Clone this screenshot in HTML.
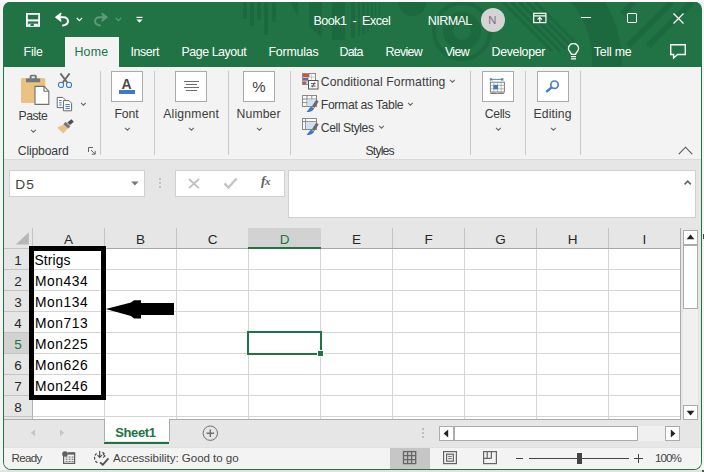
<!DOCTYPE html>
<html lang="en">
<head>
<meta charset="utf-8">
<title>Book1 - Excel</title>
<style>
html,body{margin:0;padding:0;}
body{width:704px;height:472px;overflow:hidden;background:#f5f4f4;position:relative;font-family:"Liberation Sans",sans-serif;}
.a{position:absolute;}
.t{position:absolute;white-space:pre;font-family:"Liberation Sans",sans-serif;}
#win{position:absolute;left:3px;top:2px;width:697px;height:467px;border:1px solid #217346;border-top:none;border-radius:7px 7px 8px 8px;overflow:hidden;background:linear-gradient(#217346 0,#217346 120px,#f3f3f3 120px);}
#in{position:absolute;left:-4px;top:-2px;width:704px;height:472px;}
.sep{position:absolute;width:1px;background:#c8c8c8;top:71px;height:84px;}
.box{position:absolute;top:71px;width:30px;height:29px;border:1px solid #ababab;background:#fff;}
.ch{position:absolute;}
.vl{position:absolute;width:1px;background:#d4d4d4;top:249px;height:170px;}
.hl{position:absolute;height:1px;background:#d4d4d4;left:33px;width:647px;}
.rh{position:absolute;left:4px;width:28px;height:20px;border-bottom:1px solid #c4c4c4;font-size:13.5px;line-height:24px;overflow:hidden;text-align:center;color:#262626;}
.chd{position:absolute;top:228px;height:20px;width:71px;font-size:13.5px;line-height:23px;text-align:center;color:#262626;}
.hsep{position:absolute;top:228px;width:1px;height:20px;background:#c4c4c4;}
.cell{position:absolute;white-space:pre;font-size:13px;line-height:13px;color:#000;}
</style>
</head>
<body>
<div class="a" style="left:0;top:470px;width:704px;height:2px;background:#e2e2e2;"></div>
<div class="a" style="left:0;top:0;width:704px;height:2px;background:#fbfafa;"></div>
<div id="win"><div id="in">
<div class="a" style="left:0;top:0;width:704px;height:67px;background:#217346;"></div>
<svg class="a" style="left:0;top:0" width="704" height="67" viewBox="0 0 704 67">
 <g fill="#1d693f">
  <rect x="243" y="2" width="4" height="17"/><rect x="250" y="2" width="4" height="24"/><rect x="257" y="2" width="4" height="18"/><rect x="264" y="2" width="4" height="33"/><rect x="272" y="2" width="4" height="20"/>
  <polygon points="290.500,2 298.200,2 298.200,17"/>
  <polygon points="309,2 322,2 322,37 309,27"/><rect x="332" y="2" width="13" height="38"/>
  <rect x="351" y="2" width="4" height="36"/><rect x="358" y="2" width="2" height="35"/><rect x="362.500" y="2" width="2" height="33"/><rect x="367" y="2" width="1.500" height="30"/><rect x="371" y="2" width="1.500" height="26"/><rect x="375" y="2" width="1" height="22"/><rect x="379" y="2" width="1" height="18"/>
  <circle cx="412.500" cy="2" r="14"/>
 </g>
 <g fill="none" stroke="#1d693f">
  <circle cx="462" cy="31" r="14" stroke-width="10"/>
  <circle cx="462" cy="31" r="28" stroke-width="4"/>
  <path d="M571 2A92 92 0 0 1 592 67H622A122 122 0 0 0 605 2z" fill="#1d693f" stroke="none"/>
 </g>
 <g stroke="#1d693f" stroke-width="3">
  <line x1="503" y1="2" x2="552" y2="51"/><line x1="511" y1="2" x2="560" y2="51"/><line x1="519" y1="2" x2="566" y2="49"/><line x1="527" y1="2" x2="570" y2="45"/><line x1="535" y1="2" x2="574" y2="41"/>
 </g>
 <g stroke="#1d693f" stroke-width="6">
  <line x1="634" y1="2" x2="622" y2="14"/><line x1="672" y1="2" x2="628" y2="46"/><line x1="692" y1="2" x2="648" y2="46"/>
 </g>
</svg>
<div class="a" style="left:65px;top:37px;width:54px;height:30px;background:#f3f3f3;"></div>
<!-- QAT -->
<svg class="a" style="left:25px;top:12px" width="16" height="16" viewBox="0 0 16 16" fill="none">
 <rect x="1.900" y="1.900" width="12.200" height="12" stroke="#fff" stroke-width="1.800"/><rect x="1.900" y="7.400" width="12.200" height="2" fill="#fff"/>
 <rect x="3.400" y="11.700" width="9.400" height="2.400" fill="#fff"/><rect x="5.500" y="11.700" width="3.300" height="2.300" fill="#217346"/>
</svg>
<svg class="a" style="left:54px;top:12px" width="17" height="15" viewBox="0 0 17 15" fill="none" stroke="#fff" stroke-width="2" stroke-linecap="round" stroke-linejoin="round">
 <path d="M6.800 1.400L1.800 5.200L6.800 9L5.400 5.200z" fill="#fff" stroke-width="1.400"/><path d="M3 5.200h6.600c5.400 0 6.400 7.600 -0.600 8.200"/>
</svg>
<svg class="a" style="left:76px;top:17px" width="7" height="5" viewBox="0 0 7 5" fill="none" stroke="#fff" stroke-width="1.2"><path d="M0.7 1l2.7 2.6L6.1 1"/></svg>
<svg class="a" style="left:92px;top:12px" width="17" height="15" viewBox="0 0 17 15" fill="none" stroke="#5c9a79" stroke-width="2" stroke-linecap="round" stroke-linejoin="round">
 <path d="M10.200 1.400L15.200 5.200L10.200 9L11.600 5.200z" fill="#5c9a79" stroke-width="1.400"/><path d="M14 5.200H7.400c-5.400 0 -6.400 7.600 0.600 8.200"/>
</svg>
<svg class="a" style="left:115px;top:17px" width="7" height="5" viewBox="0 0 7 5" fill="none" stroke="#5c9a79" stroke-width="1.2"><path d="M0.7 1l2.7 2.6L6.1 1"/></svg>
<svg class="a" style="left:136px;top:16px" width="7" height="8" viewBox="0 0 7 8"><rect x="0.5" y="0.8" width="6" height="1.2" fill="#fff"/><path d="M0.5 3.6h6L3.5 6.8z" fill="#fff"/></svg>
<!-- avatar -->
<div class="a" style="left:481px;top:8px;width:24px;height:24px;border-radius:12px;background:#d4d4d4;"></div>
<!-- ribbon display -->
<svg class="a" style="left:533px;top:12px" width="14" height="12" viewBox="0 0 14 12" fill="none" stroke="#fff" stroke-width="1.200"><rect x="0.700" y="1.300" width="12.200" height="9.300"/><path d="M0.700 3.900h12.200"/><path d="M6.800 10.600V5.600M4.600 7.600l2.200-2.200l2.200 2.200"/></svg>
<div class="a" style="left:581px;top:16.800px;width:10px;height:1.300px;background:#fff;"></div>
<div class="a" style="left:626.800px;top:12.800px;width:8px;height:8px;border:1.300px solid #fff;border-radius:1px;"></div>
<svg class="a" style="left:673px;top:13px" width="11" height="11" viewBox="0 0 11 11" stroke="#fff" stroke-width="1.300"><path d="M0.500 0.500l10 10M10.500 0.500l-10 10"/></svg>
<!-- lightbulb -->
<svg class="a" style="left:567px;top:43px" width="14" height="18" viewBox="0 0 14 18" fill="none" stroke="#fff" stroke-width="1.300"><path d="M4.400 11.400c0-2-3-3-3-5.800a5.100 5.100 0 0 1 10.200 0c0 2.800-3 3.800-3 5.800z"/><path d="M4 13.600h5M4 15.900h5" stroke-width="1.200"/></svg>
<!-- comment -->
<svg class="a" style="left:669px;top:43px" width="18" height="17" viewBox="0 0 18 17" fill="none" stroke="#fff" stroke-width="1.400" stroke-linejoin="miter"><path d="M1.700 1.700h14.600v9.800H8.600L4.600 15V11.500H1.700z"/></svg>

<div class="a" style="left:0;top:67px;width:704px;height:92px;background:#f3f3f3;"></div>
<div class="a" style="left:0;top:159px;width:704px;height:1px;background:#dadada;"></div>
<!-- paste -->
<svg class="a" style="left:20px;top:74px" width="31" height="32" viewBox="0 0 31 32">
 <rect x="1" y="4" width="24.400" height="25" rx="1.500" fill="#eac282"/>
 <path d="M6 8.200V4.400h3.600V2.400a1.600 1.600 0 0 1 1.600-1.600h4a1.600 1.600 0 0 1 1.600 1.600V4.400h3.400V8.200z" fill="#777"/><rect x="11.600" y="2.400" width="3.200" height="1.800" fill="#f3f3f3"/>
 <path d="M15 12.400h9l4.800 4.800v13.200H15z" fill="#fff" stroke="#6f6f6f" stroke-width="1.100"/><path d="M24 12.400v4.800h4.800" fill="none" stroke="#6f6f6f" stroke-width="1.100"/>
</svg>
<svg class="ch" style="left:30px;top:129px" width="7" height="5" viewBox="0 0 7 5" fill="none" stroke="#666" stroke-width="1.050"><path d="M1 0.800l2.400 2.400L5.800 0.800"/></svg>
<!-- cut -->
<svg class="a" style="left:57px;top:73px" width="16" height="16" viewBox="0 0 16 16" fill="none">
 <path d="M3.400 0.400L10.400 9.800M12.600 0.400L5.600 9.800" stroke="#6a6a6a" stroke-width="1.900"/>
 <circle cx="4" cy="11.900" r="2.600" stroke="#4178be" stroke-width="1.050"/><circle cx="12" cy="11.900" r="2.600" stroke="#4178be" stroke-width="1.050"/>
</svg>
<!-- copy -->
<svg class="a" style="left:56px;top:96px" width="18" height="16" viewBox="0 0 18 16" fill="none">
 <path d="M1.200 1.400h5.600l2.400 2.400v7.800H1.200z" fill="#fff" stroke="#6a6a6a"/>
 <path d="M7.400 4.600h5.600l2.600 2.600v7.600H7.400z" fill="#fff" stroke="#6a6a6a"/>
 <path d="M3 4.600h2.600M3 6.800h2.600M3 9h2.600" stroke="#4178be"/><path d="M9.400 8.600h4.400M9.400 10.600h4.400M9.400 12.600h4.400" stroke="#4178be"/>
</svg>
<svg class="ch" style="left:80px;top:102px" width="7" height="5" viewBox="0 0 7 5" fill="none" stroke="#666" stroke-width="1.050"><path d="M1 0.800l2.400 2.400L5.800 0.800"/></svg>
<!-- format painter -->
<svg class="a" style="left:57px;top:119px" width="17" height="16" viewBox="0 0 17 16">
 <path d="M0.200 8.600L6.200 14.600L11 9.200L6.800 5.400z" fill="#eac282"/>
 <path d="M6.400 5.200l4.800 4.400l2.200-2.400l-4.800-4.400z" fill="#777"/><path d="M10.400 3.600l2.600 2.400l3.800-3.200l-2.400-2.600z" fill="#4e4e4e"/>
</svg>
<!-- dialog launcher -->
<svg class="a" style="left:88px;top:147px" width="8" height="8" viewBox="0 0 8 8" fill="none" stroke="#666" stroke-width="1"><path d="M0.500 5V0.500H5"/><path d="M3 3l4 4M7.200 3.800V7.200H3.800"/></svg>
<div class="sep" style="left:100px"></div><div class="sep" style="left:154px"></div><div class="sep" style="left:228px"></div><div class="sep" style="left:290px"></div>
<div class="sep" style="left:470px"></div><div class="sep" style="left:525px"></div><div class="sep" style="left:580px"></div>
<!-- font -->
<div class="box" style="left:111px"></div>
<div class="a" style="left:119px;top:90px;width:16px;height:4px;background:#4178be;"></div>
<svg class="ch" style="left:124px;top:127px" width="7" height="5" viewBox="0 0 7 5" fill="none" stroke="#666" stroke-width="1.050"><path d="M1 0.800l2.400 2.400L5.800 0.800"/></svg>
<!-- alignment -->
<div class="box" style="left:175px"></div>
<div class="a" style="left:184px;top:81px;width:15px;height:1px;background:#6e6e6e;"></div>
<div class="a" style="left:186px;top:84px;width:11px;height:1px;background:#6e6e6e;"></div>
<div class="a" style="left:184px;top:87px;width:15px;height:1px;background:#6e6e6e;"></div>
<div class="a" style="left:186px;top:90px;width:11px;height:1px;background:#6e6e6e;"></div>
<svg class="ch" style="left:188px;top:127px" width="7" height="5" viewBox="0 0 7 5" fill="none" stroke="#666" stroke-width="1.050"><path d="M1 0.800l2.400 2.400L5.800 0.800"/></svg>
<!-- number -->
<div class="box" style="left:243px"></div>
<svg class="ch" style="left:256px;top:127px" width="7" height="5" viewBox="0 0 7 5" fill="none" stroke="#666" stroke-width="1.050"><path d="M1 0.800l2.400 2.400L5.800 0.800"/></svg>
<!-- styles icons -->
<svg class="a" style="left:302px;top:73px" width="17" height="17" viewBox="0 0 17 17" fill="none">
 <rect x="0.500" y="0.500" width="13" height="11" fill="#fff" stroke="#8a8a8a"/>
 <path d="M0.500 4.200h13M0.500 8h13M5.200 0.500v11M9.400 0.500v11" stroke="#bdbdbd" stroke-width="0.800"/>
 <rect x="1" y="1" width="6.400" height="3" fill="#d9532c"/><rect x="1" y="4.800" width="5.400" height="2.800" fill="#4178be"/><rect x="1" y="8.400" width="3.400" height="2.800" fill="#d9532c"/>
 <rect x="6.500" y="7.500" width="9.500" height="8.500" fill="#fff" stroke="#555"/><path d="M9 10.600h4.600M9 13h4.600M12.600 9.400l-2.400 5" stroke="#444" stroke-width="0.900"/>
</svg>
<svg class="a" style="left:302px;top:95px" width="17" height="18" viewBox="0 0 17 18" fill="none">
 <rect x="0.500" y="0.500" width="14" height="11" fill="#fff" stroke="#8a8a8a"/><path d="M0.500 4h14M0.500 7.600h14M5 0.500v11M9.800 0.500v11" stroke="#8a8a8a"/>
 <rect x="5.400" y="4.400" width="8.600" height="6.600" fill="#cfe0f3"/>
 <path d="M10 11.200L14.400 4.600l2.200 1.800L12.400 13z" fill="#6a6a6a"/><path d="M4 16.800c1.800-0.200 2-2.800 5.200-5.400l3 2.200c-1.400 3-4.600 4-8.200 3.200z" fill="#4178be"/>
</svg>
<svg class="a" style="left:302px;top:118px" width="17" height="18" viewBox="0 0 17 18" fill="none">
 <rect x="0.500" y="0.500" width="14" height="11" fill="#fff" stroke="#8a8a8a"/><path d="M0.500 3.600h14M3.600 0.500v11" stroke="#8a8a8a"/>
 <rect x="4.200" y="4.200" width="9.800" height="6.800" fill="#cfe0f3"/>
 <path d="M10 11.200L14.400 4.600l2.200 1.800L12.400 13z" fill="#6a6a6a"/><path d="M4 16.800c1.800-0.200 2-2.800 5.200-5.400l3 2.200c-1.400 3-4.600 4-8.200 3.200z" fill="#4178be"/>
</svg>
<svg class="ch" style="left:449px;top:79px" width="7" height="5" viewBox="0 0 7 5" fill="none" stroke="#666" stroke-width="1.050"><path d="M1 0.800l2.400 2.400L5.800 0.800"/></svg>
<svg class="ch" style="left:407px;top:102px" width="7" height="5" viewBox="0 0 7 5" fill="none" stroke="#666" stroke-width="1.050"><path d="M1 0.800l2.400 2.400L5.800 0.800"/></svg>
<svg class="ch" style="left:378px;top:125px" width="7" height="5" viewBox="0 0 7 5" fill="none" stroke="#666" stroke-width="1.050"><path d="M1 0.800l2.400 2.400L5.800 0.800"/></svg>
<!-- cells -->
<div class="box" style="left:482px"></div>
<svg class="a" style="left:489px;top:77px" width="17" height="18" viewBox="0 0 17 18" fill="none">
 <path d="M1.300 2.400h12.600M1.300 1v2.800M13.900 1v2.800M3.300 1.200L2 2.400L3.300 3.600M11.900 1.200l1.300 1.200L11.900 3.600" stroke="#4178be" stroke-width="0.900"/>
 <rect x="1.400" y="5.200" width="14" height="9.800" fill="#fff" stroke="#7a7a7a"/><path d="M1.400 8.400h14M1.400 11.800h14M4.800 5.200v9.800M8.600 5.200v9.800M12.200 5.200v9.800" stroke="#a8a8a8" stroke-width="0.800"/>
 <rect x="4.400" y="7.900" width="4.600" height="4.400" fill="#4178be"/><path d="M1.800 16.400h5.600M8.800 16.400h5.600" stroke="#7a7a7a" stroke-width="1.100" stroke-linecap="round"/>
</svg>
<svg class="ch" style="left:495px;top:127px" width="7" height="5" viewBox="0 0 7 5" fill="none" stroke="#666" stroke-width="1.050"><path d="M1 0.800l2.400 2.400L5.800 0.800"/></svg>
<!-- editing -->
<div class="box" style="left:537px"></div>
<svg class="a" style="left:545px;top:79px" width="15" height="14" viewBox="0 0 15 14" fill="none" stroke="#4a80c2"><circle cx="9.500" cy="5.700" r="3.700" stroke-width="1.700"/><path d="M6.400 8.600L2 12.200" stroke-width="2.500" stroke-linecap="round"/></svg>
<svg class="ch" style="left:550px;top:127px" width="7" height="5" viewBox="0 0 7 5" fill="none" stroke="#666" stroke-width="1.050"><path d="M1 0.800l2.400 2.400L5.800 0.800"/></svg>
<!-- collapse -->
<svg class="a" style="left:678px;top:146px" width="15" height="9" viewBox="0 0 15 9" fill="none" stroke="#555" stroke-width="1.100"><path d="M0.800 8.200L7.500 1.200L14.200 8.200"/></svg>

<div class="a" style="left:0;top:160px;width:704px;height:69px;background:#e6e6e6;"></div>
<div class="a" style="left:9px;top:170px;width:134px;height:25px;background:#fff;border:1px solid #d0d0d0;"></div>
<svg class="a" style="left:131px;top:181px" width="8" height="5" viewBox="0 0 8 5"><path d="M0.200 0.400h7.400L3.900 4.400z" fill="#777"/></svg>
<div class="a" style="left:159px;top:178px;width:2px;height:2px;background:#c0c0c0;"></div>
<div class="a" style="left:159px;top:182px;width:2px;height:2px;background:#c0c0c0;"></div>
<div class="a" style="left:159px;top:186px;width:2px;height:2px;background:#c0c0c0;"></div>
<div class="a" style="left:175px;top:170px;width:108px;height:25px;background:#fff;border:1px solid #d0d0d0;"></div>
<svg class="a" style="left:188px;top:178px" width="12" height="11" viewBox="0 0 12 11" stroke="#c0c0c0" stroke-width="1.700"><path d="M1 1l10 9.200M11 1l-10 9.200"/></svg>
<svg class="a" style="left:223px;top:177px" width="15" height="12" viewBox="0 0 15 12" fill="none" stroke="#c4c4c4" stroke-width="2.300"><path d="M1.400 6.400l4 4.200L13.600 1.400"/></svg>
<div class="a" style="left:288px;top:170px;width:406px;height:46px;background:#fff;border:1px solid #d0d0d0;"></div>
<svg class="a" style="left:684px;top:180px" width="8" height="5" viewBox="0 0 8 5" fill="none" stroke="#666" stroke-width="1.600"><path d="M0.600 4.400L3.700 1.200L6.800 4.400"/></svg>
<span class="t" style="left:261px;top:174px;font-family:'Liberation Serif',serif;font-style:italic;font-weight:700;font-size:13.500px;line-height:14px;color:#5e5e5e;letter-spacing:-0.500px;">f<span style="font-size:11px;letter-spacing:0;">x</span></span>

<div class="a" style="left:4px;top:228px;width:697px;height:192px;background:#e6e6e6;"></div>
<div class="a" style="left:33px;top:249px;width:647px;height:170px;background:#fff;"></div>
<svg class="a" style="left:15px;top:232px" width="14" height="13" viewBox="0 0 14 13"><path d="M13.800 0.200V12.600H0.800z" fill="#b7b7b7"/></svg>
<div class="a" style="left:248px;top:228px;width:73px;height:19px;background:#d2d2d2;"></div>
<div class="a" style="left:4px;top:248px;width:677px;height:1px;background:#a6a6a6;"></div>
<div class="a" style="left:4px;top:248px;width:28px;height:1px;background:#c4c4c4;"></div>
<div class="a" style="left:248px;top:247px;width:73px;height:2px;background:#217346;"></div>
<div class="hsep" style="left:32px"></div>
<div class="hsep" style="left:104px"></div>
<div class="hsep" style="left:176px"></div>
<div class="hsep" style="left:392px"></div>
<div class="hsep" style="left:464px"></div>
<div class="hsep" style="left:536px"></div>
<div class="hsep" style="left:608px"></div>
<div class="hsep" style="left:680px"></div>
<div class="chd" style="left:33px;color:#262626">A</div>
<div class="chd" style="left:105px;color:#262626">B</div>
<div class="chd" style="left:177px;color:#262626">C</div>
<div class="chd" style="left:249px;color:#217346">D</div>
<div class="chd" style="left:321px;color:#262626">E</div>
<div class="chd" style="left:393px;color:#262626">F</div>
<div class="chd" style="left:465px;color:#262626">G</div>
<div class="chd" style="left:537px;color:#262626">H</div>
<div class="chd" style="left:609px;color:#262626">I</div>
<div class="rh" style="top:249px;height:20px">1</div>
<div class="rh" style="top:270px;height:20px">2</div>
<div class="rh" style="top:291px;height:20px">3</div>
<div class="rh" style="top:312px;height:20px">4</div>
<div class="rh" style="top:333px;height:20px;background:#d2d2d2;color:#217346">5</div>
<div class="rh" style="top:354px;height:20px">6</div>
<div class="rh" style="top:375px;height:20px">7</div>
<div class="rh" style="top:396px;height:20px">8</div>
<div class="rh" style="top:417px;height:2px;border-bottom:none"></div>
<div class="a" style="left:32px;top:249px;width:1px;height:170px;background:#b4b4b4;"></div>
<div class="a" style="left:32px;top:333px;width:1px;height:20px;background:#217346;"></div>
<div class="vl" style="left:104px"></div>
<div class="vl" style="left:176px"></div>
<div class="vl" style="left:248px"></div>
<div class="vl" style="left:320px"></div>
<div class="vl" style="left:392px"></div>
<div class="vl" style="left:464px"></div>
<div class="vl" style="left:536px"></div>
<div class="vl" style="left:608px"></div>
<div class="hl" style="top:269px"></div>
<div class="hl" style="top:290px"></div>
<div class="hl" style="top:311px"></div>
<div class="hl" style="top:332px"></div>
<div class="hl" style="top:353px"></div>
<div class="hl" style="top:374px"></div>
<div class="hl" style="top:395px"></div>
<div class="hl" style="top:416px"></div>
<div class="a" style="left:680px;top:228px;width:1px;height:192px;background:#ababab;"></div>
<div class="a" style="left:4px;top:419px;width:677px;height:1px;background:#ababab;"></div>
<div class="a" style="left:247px;top:331px;width:71px;height:20px;border:2px solid #217346;"></div>
<div class="a" style="left:317px;top:350px;width:5px;height:5px;background:#217346;border:1px solid #fff;"></div>
<div class="a" style="left:29px;top:245.500px;width:67px;height:144px;border:5px solid #000;"></div>
<svg class="a" style="left:104px;top:298px" width="72" height="23" viewBox="0 0 72 23"><path d="M1.800 11L27 4.600L30 2.200H37V5H70V17H37V20.600H30L27 18z" fill="#000"/></svg>
<div class="a" style="left:683px;top:230px;width:13px;height:13px;background:#fff;border:1px solid #ababab;"></div>
<svg class="a" style="left:686px;top:234px" width="9" height="6" viewBox="0 0 9 6"><path d="M4.500 0.600L8.400 5.200H0.600z" fill="#222"/></svg>
<div class="a" style="left:683px;top:245px;width:13px;height:62px;background:#fff;border:1px solid #ababab;"></div>
<div class="a" style="left:683px;top:309px;width:15px;height:96px;background:#f0f0f0;"></div>
<div class="a" style="left:683px;top:405px;width:13px;height:13px;background:#fff;border:1px solid #ababab;"></div>
<svg class="a" style="left:686px;top:410px" width="9" height="6" viewBox="0 0 9 6"><path d="M4.500 5.400L8.400 0.800H0.600z" fill="#222"/></svg>
<div class="a" style="left:4px;top:420px;width:697px;height:27px;background:#e6e6e6;"></div>
<svg class="a" style="left:30px;top:429px" width="6" height="8" viewBox="0 0 6 8"><path d="M5 0.400v6.800L0.800 3.800z" fill="#c4c4c4"/></svg>
<svg class="a" style="left:59px;top:429px" width="6" height="8" viewBox="0 0 6 8"><path d="M1 0.400v6.800L5.200 3.800z" fill="#c4c4c4"/></svg>
<div class="a" style="left:104px;top:419px;width:64px;height:22px;background:#fff;border-left:1px solid #ababab;border-right:1px solid #ababab;"></div>
<div class="a" style="left:104px;top:441.500px;width:65px;height:2.300px;background:#217346;"></div>
<svg class="a" style="left:202px;top:425px" width="17" height="17" viewBox="0 0 17 17" fill="none" stroke="#6f6f6f"><circle cx="8.300" cy="8.200" r="7.200" stroke-width="1"/><path d="M8.300 4.400v7.600M4.500 8.200h7.600" stroke-width="1.400"/></svg>
<div class="a" style="left:422px;top:428px;width:2px;height:2px;background:#bdbdbd;"></div>
<div class="a" style="left:422px;top:432px;width:2px;height:2px;background:#bdbdbd;"></div>
<div class="a" style="left:422px;top:436px;width:2px;height:2px;background:#bdbdbd;"></div>
<div class="a" style="left:439px;top:426px;width:13px;height:13px;background:#fff;border:1px solid #ababab;"></div>
<svg class="a" style="left:443px;top:429px" width="6" height="9" viewBox="0 0 6 9"><path d="M0.600 4.500L5.200 0.600v7.800z" fill="#222"/></svg>
<div class="a" style="left:454px;top:426px;width:182px;height:13px;background:#fff;border:1px solid #ababab;"></div>
<div class="a" style="left:638px;top:426px;width:27px;height:15px;background:#f0f0f0;"></div>
<div class="a" style="left:665px;top:426px;width:13px;height:13px;background:#fff;border:1px solid #ababab;"></div>
<svg class="a" style="left:670px;top:429px" width="6" height="9" viewBox="0 0 6 9"><path d="M5.400 4.500L0.800 0.600v7.800z" fill="#222"/></svg>
<!-- status bar -->
<div class="a" style="left:4px;top:447px;width:697px;height:23px;background:#f3f3f3;"></div>
<div class="a" style="left:4px;top:447px;width:697px;height:1px;background:#e0e0e0;"></div>
<svg class="a" style="left:62px;top:451px" width="14" height="13" viewBox="0 0 14 13" fill="none">
 <path d="M1.600 5v7.400h11V2.400" stroke="#5e5e5e" stroke-width="1.200"/><rect x="5.600" y="1.200" width="7.600" height="2.400" fill="#5e5e5e"/>
 <path d="M3.600 6h2M6.600 6h2M9.600 6h2M3.600 8.200h2M6.600 8.200h2M9.600 8.200h2M3.600 10.400h2M6.600 10.400h2M9.600 10.400h2" stroke="#5e5e5e" stroke-width="0.900"/>
 <circle cx="3" cy="3" r="2.800" fill="#5e5e5e"/>
</svg>
<svg class="a" style="left:92px;top:450px" width="18" height="16" viewBox="0 0 18 16" fill="none" stroke="#505050" stroke-width="1.300">
 <path d="M4.600 3.400A5.800 5.800 0 0 0 6.200 13.200" stroke-dasharray="2.600 1.500"/><path d="M10.400 2.400a5.800 5.800 0 0 1 2 1.800" />
 <path d="M7.700 1v6.200M5.500 5.200l2.200 2.200l2.200-2.200" stroke-width="1.200"/><path d="M11 4.200l2 1.800l-2 1.600" stroke-width="1.100"/>
 <path d="M8 12.400l2.800 2.400l5.600-6.400" stroke-width="1.800"/>
</svg>
<div class="a" style="left:390px;top:448px;width:40px;height:21px;background:#c6c6c6;"></div>
<svg class="a" style="left:402px;top:450px" width="15" height="15" viewBox="0 0 15 15" fill="none" stroke="#666" stroke-width="1.300"><rect x="1.500" y="1.600" width="12.200" height="12"/><path d="M1.500 5.600h12.200M1.500 9.600h12.200M5.600 1.600v12M9.600 1.600v12"/></svg>
<svg class="a" style="left:442px;top:450px" width="16" height="15" viewBox="0 0 16 15" fill="none" stroke="#666" stroke-width="1.200"><rect x="1.600" y="1.600" width="12.800" height="12"/><rect x="4.600" y="4.200" width="6.800" height="7"/><path d="M6.200 6.400h3.600M6.200 8.600h3.600" stroke-width="1"/></svg>
<svg class="a" style="left:482px;top:450px" width="16" height="15" viewBox="0 0 16 15" fill="none" stroke="#666" stroke-width="1.200"><rect x="1.600" y="1.600" width="12.800" height="12"/><path d="M5.200 1.600v6.800M9.400 1.600v6.800M1.600 8.400h7.800"/></svg>
<div class="a" style="left:516px;top:458px;width:7px;height:1px;background:#444;"></div>
<div class="a" style="left:529px;top:458px;width:100px;height:1px;background:#444;"></div>
<div class="a" style="left:577px;top:453px;width:5px;height:11px;background:#444;"></div>
<div class="a" style="left:634px;top:458px;width:9px;height:1px;background:#444;"></div>
<div class="a" style="left:638px;top:454px;width:1px;height:9px;background:#444;"></div>

<span class="t" style="left:313.50px;top:15.13px;font-size:12.6px;line-height:12.6px;color:#fff;letter-spacing:-0.536px;">Book1  -  Excel</span>
<span class="t" style="left:427.75px;top:15.13px;font-size:12.6px;line-height:12.6px;color:#fff;letter-spacing:-0.600px;">NIRMAL</span>
<span class="t" style="left:488.30px;top:14.83px;font-size:11.3px;line-height:11.3px;color:#7b6f8c;letter-spacing:0.000px;">N</span>
<span class="t" style="left:23.50px;top:45.80px;font-size:12.4px;line-height:12.4px;color:#fff;letter-spacing:-0.167px;">File</span>
<span class="t" style="left:130.50px;top:45.80px;font-size:12.4px;line-height:12.4px;color:#fff;letter-spacing:-0.400px;">Insert</span>
<span class="t" style="left:181.50px;top:45.80px;font-size:12.4px;line-height:12.4px;color:#fff;letter-spacing:-0.450px;">Page Layout</span>
<span class="t" style="left:268.50px;top:45.80px;font-size:12.4px;line-height:12.4px;color:#fff;letter-spacing:-0.214px;">Formulas</span>
<span class="t" style="left:339.50px;top:45.80px;font-size:12.4px;line-height:12.4px;color:#fff;letter-spacing:-0.750px;">Data</span>
<span class="t" style="left:385.50px;top:45.80px;font-size:12.4px;line-height:12.4px;color:#fff;letter-spacing:-0.700px;">Review</span>
<span class="t" style="left:445.00px;top:45.80px;font-size:12.4px;line-height:12.4px;color:#fff;letter-spacing:-0.667px;">View</span>
<span class="t" style="left:491.50px;top:45.80px;font-size:12.4px;line-height:12.4px;color:#fff;letter-spacing:-0.312px;">Developer</span>
<span class="t" style="left:593.75px;top:45.80px;font-size:12.4px;line-height:12.4px;color:#fff;letter-spacing:-0.208px;">Tell me</span>
<span class="t" style="left:74.50px;top:45.80px;font-size:12.4px;line-height:12.4px;color:#217346;letter-spacing:0.167px;">Home</span>
<span class="t" style="left:18.50px;top:109.97px;font-size:12.2px;line-height:12.2px;color:#3c3c3c;letter-spacing:-0.500px;">Paste</span>
<span class="t" style="left:17.75px;top:145.47px;font-size:12.2px;line-height:12.2px;color:#3c3c3c;letter-spacing:-0.156px;">Clipboard</span>
<span class="t" style="left:114.50px;top:108.47px;font-size:12.2px;line-height:12.2px;color:#3c3c3c;letter-spacing:-0.083px;">Font</span>
<span class="t" style="left:163.25px;top:108.47px;font-size:12.2px;line-height:12.2px;color:#3c3c3c;letter-spacing:0.188px;">Alignment</span>
<span class="t" style="left:236.50px;top:108.47px;font-size:12.2px;line-height:12.2px;color:#3c3c3c;letter-spacing:0.150px;">Number</span>
<span class="t" style="left:320.75px;top:76.47px;font-size:12.2px;line-height:12.2px;color:#3c3c3c;letter-spacing:0.095px;">Conditional Formatting</span>
<span class="t" style="left:320.75px;top:99.47px;font-size:12.2px;line-height:12.2px;color:#3c3c3c;letter-spacing:-0.304px;">Format as Table</span>
<span class="t" style="left:320.75px;top:122.22px;font-size:12.2px;line-height:12.2px;color:#3c3c3c;letter-spacing:-0.425px;">Cell Styles</span>
<span class="t" style="left:365.50px;top:145.47px;font-size:12.2px;line-height:12.2px;color:#3c3c3c;letter-spacing:-0.800px;">Styles</span>
<span class="t" style="left:484.75px;top:108.47px;font-size:12.2px;line-height:12.2px;color:#3c3c3c;letter-spacing:-0.312px;">Cells</span>
<span class="t" style="left:533.50px;top:108.47px;font-size:12.2px;line-height:12.2px;color:#3c3c3c;letter-spacing:0.125px;">Editing</span>
<span class="t" style="left:252.25px;top:79.30px;font-size:15px;line-height:15px;color:#444;letter-spacing:0.000px;">%</span>
<span class="t" style="left:121.60px;top:76.65px;font-size:14px;line-height:14px;color:#4a4a4a;font-weight:700;letter-spacing:0.000px;">A</span>
<span class="t" style="left:15.25px;top:177.95px;font-size:13.7px;line-height:13.7px;color:#444;letter-spacing:1.000px;">D5</span>
<span class="t" style="left:11.50px;top:451.88px;font-size:11.6px;line-height:11.6px;color:#444;letter-spacing:-0.675px;">Ready</span>
<span class="t" style="left:113.00px;top:452.18px;font-size:11.6px;line-height:11.6px;color:#444;letter-spacing:-0.052px;">Accessibility: Good to go</span>
<span class="t" style="left:655.00px;top:452.18px;font-size:11.6px;line-height:11.6px;color:#444;letter-spacing:-0.917px;">100%</span>
<span class="t" style="left:115.25px;top:425.70px;font-size:13px;line-height:13px;color:#217346;font-weight:700;letter-spacing:-0.400px;">Sheet1</span>
<span class="t" style="left:34.40px;top:253.72px;font-size:13.8px;line-height:13.8px;color:#000;letter-spacing:0.160px;">Strigs</span>
<span class="t" style="left:35.00px;top:274.82px;font-size:13.8px;line-height:13.8px;color:#000;letter-spacing:0.580px;">Mon434</span>
<span class="t" style="left:35.00px;top:295.82px;font-size:13.8px;line-height:13.8px;color:#000;letter-spacing:0.580px;">Mon134</span>
<span class="t" style="left:35.00px;top:316.82px;font-size:13.8px;line-height:13.8px;color:#000;letter-spacing:0.580px;">Mon713</span>
<span class="t" style="left:35.00px;top:337.82px;font-size:13.8px;line-height:13.8px;color:#000;letter-spacing:0.580px;">Mon225</span>
<span class="t" style="left:35.00px;top:358.82px;font-size:13.8px;line-height:13.8px;color:#000;letter-spacing:0.580px;">Mon626</span>
<span class="t" style="left:35.00px;top:379.82px;font-size:13.8px;line-height:13.8px;color:#000;letter-spacing:0.580px;">Mon246</span>
</div></div>
<div class="a" style="left:703px;top:234px;width:1px;height:5px;background:#444;"></div>
<div class="a" style="left:702px;top:470px;width:2px;height:2px;background:#555;"></div>
</body>
</html>
